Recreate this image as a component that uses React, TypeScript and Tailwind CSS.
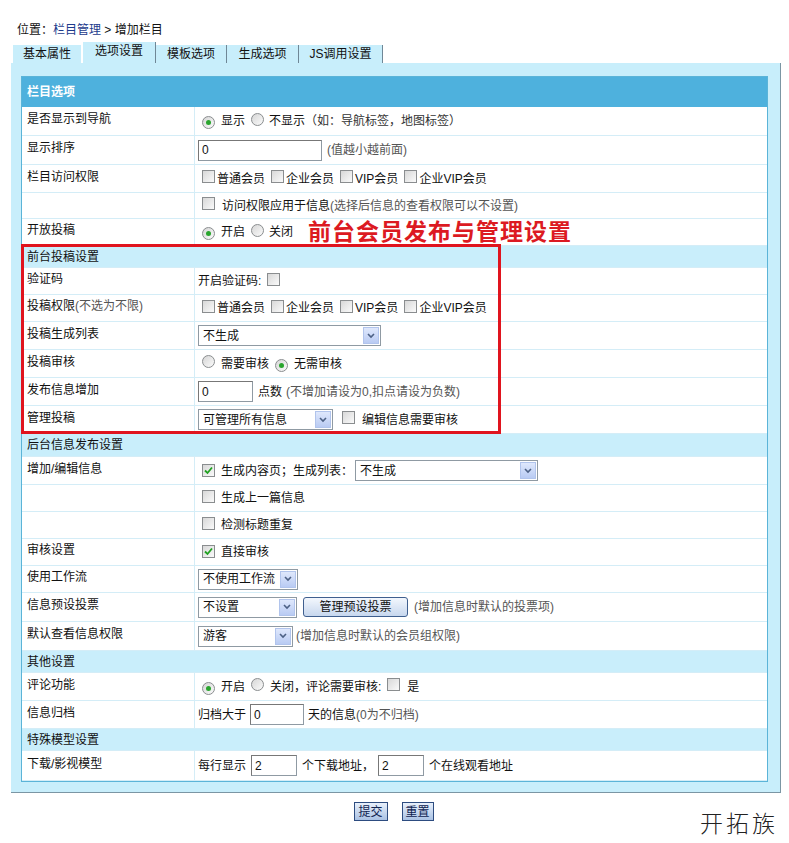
import React from 'react';

function Check({ checked = false }: { checked?: boolean }) {
  return (
    <span className="inline-flex items-center justify-center w-[13px] h-[13px] shrink-0 border border-[#8a8d8f] bg-gradient-to-br from-[#d8d8d8] to-[#fafafa]">
      {checked && (
        <svg width="9" height="9" viewBox="0 0 9 9">
          <path d="M1 4.5 L3.5 7 L8 1.5" fill="none" stroke="#21a121" strokeWidth="1.8" />
        </svg>
      )}
    </span>
  );
}

function Radio({ checked = false }: { checked?: boolean }) {
  return (
    <span className="inline-flex items-center justify-center w-[13px] h-[13px] shrink-0 rounded-full border border-[#8a8d8f] bg-gradient-to-br from-[#d6d6d6] to-[#fbfbfb]">
      {checked && <span className="w-[5px] h-[5px] rounded-full bg-[#2aa52e]" />}
    </span>
  );
}

function Select({ text, className }: { text: string; className: string }) {
  return (
    <div className={`flex items-center h-[21px] border border-[#8f9aa3] bg-white pl-[4px] pr-[1px] ${className}`}>
      <span className="flex-1">{text}</span>
      <span className="flex items-center justify-center w-[16px] h-[17px] border border-[#b1c4ec] bg-gradient-to-b from-[#dfe8fc] to-[#b9cbf3]">
        <svg width="8" height="6" viewBox="0 0 8 6">
          <path d="M1 1 L4 4 L7 1" fill="none" stroke="#4d6185" strokeWidth="1.6" />
        </svg>
      </span>
    </div>
  );
}

function Input({ v, className }: { v: string; className: string }) {
  return (
    <div className={`flex items-center h-[21px] border border-[#8f9aa3] border-t-[#777] border-l-[#777] bg-white pl-[3px] ${className}`}>
      {v}
    </div>
  );
}

function Row({ label, h, children }: { label?: React.ReactNode; h: string; children?: React.ReactNode }) {
  return (
    <div className={`flex border-b border-[#d4edf7] ${h}`}>
      <div className="w-[173px] shrink-0 border-r border-[#d4edf7] pl-[5px] pb-[4px] flex items-center">{label}</div>
      <div className="flex-1 flex items-center pl-[3px] whitespace-nowrap">{children}</div>
    </div>
  );
}

function Section({ title, h }: { title: string; h: string }) {
  return <div className={`flex items-center bg-[#c9eefb] pl-[5px] border-b border-[#d4edf7] ${h}`}>{title}</div>;
}

const tabs = ['基本属性', '选项设置', '模板选项', '生成选项', 'JS调用设置'];
const tabWidths = ['w-[70px]', 'w-[73px]', 'w-[71px]', 'w-[72px]', 'w-[84px]'];

export default function App() {
  return (
    <div className="relative w-[789px] h-[843px] bg-white text-[12px] leading-[16px] text-[#111] font-['Liberation_Sans','Noto_Sans_CJK_SC',sans-serif]">
      {/* 位置 */}
      <div className="pl-[17px] pt-[22px] h-[38px]">
        位置：<span className="text-[#1d3b8c]">栏目管理</span> &gt; 增加栏目
      </div>

      {/* Tabs */}
      <div className="flex items-end h-[25px] pl-[13px]">
        {tabs.map((t, i) =>
          i === 1 ? (
            <div key={t} className={`${tabWidths[i]} h-[21px] bg-[#c8eefb] border-r border-[#6f8796] flex items-start justify-center pt-[1px]`}>
              {t}
            </div>
          ) : (
            <div
              key={t}
              className={`${tabWidths[i]} h-[18px] bg-[#c8eefb] flex items-center justify-center ${i === 0 ? 'border-r-2 border-white' : 'border-r border-[#6f8796]'}`}
            >
              {t}
            </div>
          )
        )}
      </div>

      {/* Panel */}
      <div className="ml-[11px] w-[770px] bg-[#c8eefb] border-r border-b border-[#7b96a4] pt-[13px] pb-[10px] pl-[10px] pr-[12px]">
        <div className="relative border border-[#5bb4d8] bg-white">
          <div className="h-[30px] bg-[#4eb1dd] text-white font-bold flex items-center pl-[5px]">栏目选项</div>

          <Row label="是否显示到导航" h="h-[29px]">
            <span className="ml-[4px]"><Radio checked /></span>
            <span className="ml-[6px]">显示</span>
            <span className="ml-[6px]"><Radio /></span>
            <span className="ml-[5px]">不显示</span>
            <span className="text-[#333]">（如：导航标签，地图标签）</span>
          </Row>
          <Row label="显示排序" h="h-[29px]">
            <Input v="0" className="w-[124px]" />
            <span className="ml-[5px] text-[#555]">(值越小越前面)</span>
          </Row>
          <Row label="栏目访问权限" h="h-[28px]">
            <span className="ml-[4px]"><Check /></span>
            <span className="ml-[2px]">普通会员</span>
            <span className="ml-[6px]"><Check /></span>
            <span className="ml-[2px]">企业会员</span>
            <span className="ml-[6px]"><Check /></span>
            <span className="ml-[2px]">VIP会员</span>
            <span className="ml-[6px]"><Check /></span>
            <span className="ml-[2px]">企业VIP会员</span>
          </Row>
          <Row h="h-[26px]">
            <span className="ml-[4px]"><Check /></span>
            <span className="ml-[7px]">访问权限应用于信息</span>
            <span className="text-[#555]">(选择后信息的查看权限可以不设置)</span>
          </Row>
          <Row label="开放投稿" h="h-[27px]">
            <span className="ml-[4px]"><Radio checked /></span>
            <span className="ml-[6px]">开启</span>
            <span className="ml-[6px]"><Radio /></span>
            <span className="ml-[5px]">关闭</span>
            <span className="ml-[15px] -mt-[4px] text-[23px] leading-[22px] tracking-[1px] font-bold text-[#dc1a22] font-['Noto_Sans_CJK_SC',sans-serif]">
              前台会员发布与管理设置
            </span>
          </Row>

          <Section title="前台投稿设置" h="h-[22px]" />
          <Row label="验证码" h="h-[27px]">
            <span>开启验证码:</span>
            <span className="ml-[6px]"><Check /></span>
          </Row>
          <Row
            label={
              <span>
                投稿权限<span className="text-[#555]">(不选为不限)</span>
              </span>
            }
            h="h-[27px]"
          >
            <span className="ml-[4px]"><Check /></span>
            <span className="ml-[2px]">普通会员</span>
            <span className="ml-[6px]"><Check /></span>
            <span className="ml-[2px]">企业会员</span>
            <span className="ml-[6px]"><Check /></span>
            <span className="ml-[2px]">VIP会员</span>
            <span className="ml-[6px]"><Check /></span>
            <span className="ml-[2px]">企业VIP会员</span>
          </Row>
          <Row label="投稿生成列表" h="h-[28px]">
            <Select text="不生成" className="w-[183px]" />
          </Row>
          <Row label="投稿审核" h="h-[28px]">
            <span className="ml-[4px]"><Radio /></span>
            <span className="ml-[6px]">需要审核</span>
            <span className="ml-[6px]"><Radio checked /></span>
            <span className="ml-[6px]">无需审核</span>
          </Row>
          <Row label="发布信息增加" h="h-[28px]">
            <Input v="0" className="w-[55px]" />
            <span className="ml-[5px]">点数</span>
            <span className="ml-[4px] text-[#555]">(不增加请设为0,扣点请设为负数)</span>
          </Row>
          <Row label="管理投稿" h="h-[28px]">
            <Select text="可管理所有信息" className="w-[135px]" />
            <span className="ml-[9px]"><Check /></span>
            <span className="ml-[7px]">编辑信息需要审核</span>
          </Row>

          <Section title="后台信息发布设置" h="h-[23px]" />
          <Row label="增加/编辑信息" h="h-[28px]">
            <span className="ml-[4px]"><Check checked /></span>
            <span className="ml-[6px]">生成内容页；生成列表：</span>
            <Select text="不生成" className="ml-[2px] w-[183px]" />
          </Row>
          <Row h="h-[27px]">
            <span className="ml-[4px]"><Check /></span>
            <span className="ml-[6px]">生成上一篇信息</span>
          </Row>
          <Row h="h-[27px]">
            <span className="ml-[4px]"><Check /></span>
            <span className="ml-[6px]">检测标题重复</span>
          </Row>
          <Row label="审核设置" h="h-[27px]">
            <span className="ml-[4px]"><Check checked /></span>
            <span className="ml-[6px]">直接审核</span>
          </Row>
          <Row label="使用工作流" h="h-[27px]">
            <Select text="不使用工作流" className="w-[100px]" />
          </Row>
          <Row label="信息预设投票" h="h-[29px]">
            <Select text="不设置" className="w-[99px]" />
            <span className="ml-[6px] h-[20px] w-[105px] flex items-center justify-center rounded-[3px] border border-[#3f5f8f] bg-gradient-to-b from-[#f3f7fd] to-[#c7d7ee]">
              管理预设投票
            </span>
            <span className="ml-[6px] text-[#555]">(增加信息时默认的投票项)</span>
          </Row>
          <Row label="默认查看信息权限" h="h-[29px]">
            <Select text="游客" className="w-[95px]" />
            <span className="ml-[3px] text-[#555]">(增加信息时默认的会员组权限)</span>
          </Row>

          <Section title="其他设置" h="h-[22px]" />
          <Row label="评论功能" h="h-[28px]">
            <span className="ml-[4px]"><Radio checked /></span>
            <span className="ml-[6px]">开启</span>
            <span className="ml-[6px]"><Radio /></span>
            <span className="ml-[6px]">关闭，评论需要审核:</span>
            <span className="ml-[6px]"><Check /></span>
            <span className="ml-[7px]">是</span>
          </Row>
          <Row label="信息归档" h="h-[28px]">
            <span>归档大于</span>
            <Input v="0" className="ml-[4px] w-[54px] h-[20px]" />
            <span className="ml-[4px]">天的信息</span>
            <span className="text-[#555]">(0为不归档)</span>
          </Row>

          <Section title="特殊模型设置" h="h-[22px]" />
          <Row label="下载/影视模型" h="h-[30px]">
            <span>每行显示</span>
            <Input v="2" className="ml-[5px] w-[46px]" />
            <span className="ml-[5px]">个下载地址，</span>
            <Input v="2" className="ml-[4px] w-[46px]" />
            <span className="ml-[5px]">个在线观看地址</span>
          </Row>

          {/* annotation box */}
          <div className="absolute left-[-1px] top-[167px] w-[480px] h-[190px] border-[3px] border-[#e0141e] pointer-events-none" />
        </div>
      </div>

      {/* Buttons */}
      <div className="flex justify-center gap-[14px] mt-[9px] pr-[2px]">
        <span className="w-[34px] h-[19px] flex items-center justify-center border border-[#2d4c80] bg-gradient-to-b from-[#e8f0fb] to-[#aac2e4] text-[#0f2350]">提交</span>
        <span className="w-[32px] h-[19px] flex items-center justify-center border border-[#2d4c80] bg-gradient-to-b from-[#e8f0fb] to-[#aac2e4] text-[#0f2350]">重置</span>
      </div>

      {/* watermark */}
      <div className="absolute right-[11px] top-[809px] text-[23px] leading-[26px] tracking-[3px] font-light text-[#222] font-['Noto_Sans_CJK_SC',sans-serif]">
        开拓族
      </div>
    </div>
  );
}
